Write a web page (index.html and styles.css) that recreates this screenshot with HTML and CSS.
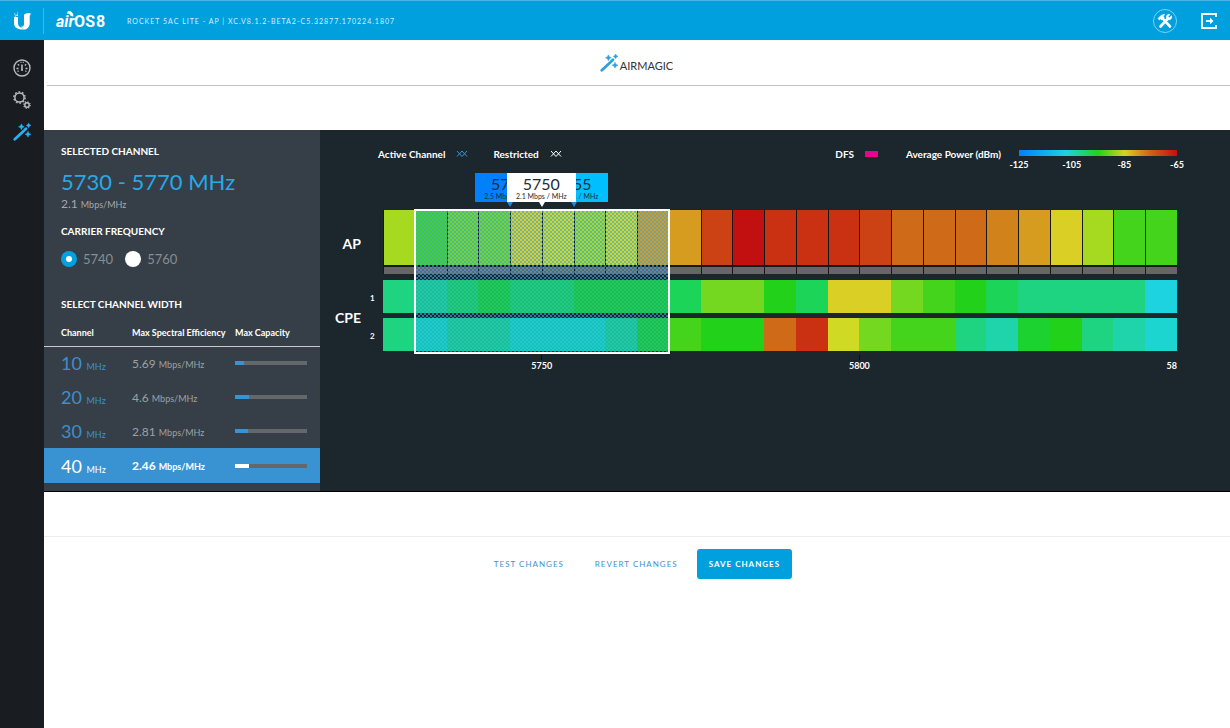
FILE: index.html
```html
<!DOCTYPE html>
<html lang="en">
<head>
<meta charset="utf-8">
<title>airOS 8 - airMagic</title>
<link rel="stylesheet" href="styles.css">
</head>
<body>
<svg class="sprite" aria-hidden="true">
  <symbol id="wand" viewBox="0 0 18 18">
    <path d="M1.800 16.200 10.400 8.200" stroke="currentColor" stroke-width="2.800" stroke-linecap="round"/>
    <path d="M11.600 7 13 5.700" stroke="currentColor" stroke-width="2.800" stroke-linecap="round"/>
    <path d="M8.400.800l1 2 2 1-2 1-1 2-1-2-2-1 2-1zM15.600 0l.9 1.600 1.500.8-1.500.8-.9 1.600-.9-1.600-1.500-.8 1.500-.8zM15 8.200l1 2 2 1-2 1-1 2-1-2-2-1 2-1z" fill="currentColor" stroke="currentColor" stroke-width=".4"/>
  </symbol>
</svg>

<header class="topbar">
  <a class="brand" href="#" aria-label="Ubiquiti">
    <svg width="18" height="18" viewBox="0 0 18 18" fill="#fff">
      <path d="M1 5h4v6.200c0 2.200 1.200 3.800 3.400 4.400.6 1 1.200 1.600 2 1.900C4.600 17.800 1 15.500 1 11z"/>
      <path d="M11 2.800C12 1.500 14 1 17.500 1v2l-.8.600V11c0 4-2.200 6.600-6.400 6.600-1.300-.8-1.900-1.900-2-3 2.200.2 2.700-1.200 2.700-3.200z"/>
      <path d="M1.200 1.400h1.200v1.200H1.200zM3.400 2.600h1.400v1.400H3.400zM1.800 3.400h1.200v1.200H1.800zM4.200.6h.8v.9h-.8z"/>
    </svg>
  </a>
  <div class="product"><span class="product-air">air</span><span class="product-os">OS</span><span class="product-num">8</span>
    <svg class="product-wave" width="7" height="6" viewBox="0 0 7 6" fill="#fff"><path d="M1 0c3.500 0 5.500 2 5.500 5.500L3.500 5C3.500 3.500 2.500 2.600 0 2.500z"/></svg>
  </div>
  <p class="device">ROCKET 5AC LITE - AP | XC.V8.1.2-BETA2-C5.32877.170224.1807</p>
  <button class="icon-btn" type="button" aria-label="Tools">
    <svg width="26" height="26" viewBox="0 0 26 26" fill="none" stroke="#fff">
      <circle cx="13" cy="13" r="11.500" stroke="#7fd0f2"/>
      <path d="M8.500 18.500 16 10.500" stroke-width="2.600" stroke-linecap="round"/>
      <path d="M19.500 7.800 17.200 9.800 16 8.700 18 6.500C15.800 5.700 13.800 7.600 14.600 10.200L16.200 11.700C18.800 12.200 20.400 10 19.500 7.800z" fill="#fff" stroke-width=".6"/>
      <path d="M10.600 10.400 18 18.500" stroke-width="2.600" stroke-linecap="round"/>
      <path d="M6 10.600 9 7.400 12.600 6.200 11.500 8.200 12 9.800 9.800 12 8.600 11 7.400 12z" fill="#fff" stroke-width=".6"/>
    </svg>
  </button>
  <button class="icon-btn" type="button" aria-label="Log out">
    <svg width="18" height="18" viewBox="0 0 18 18" fill="none" stroke="#fff" stroke-width="1.800">
      <path d="M16 5V2H2v14h14v-3"/>
      <path d="M6 9h5" /><path d="M10 5.800 13.500 9 10 12.200z" fill="#fff" stroke="none"/>
    </svg>
  </button>
</header>

<div class="shell">
  <nav class="sidebar" aria-label="Main">
    <a class="nav-link" href="#" aria-label="Dashboard">
      <svg width="18" height="18" viewBox="0 0 18 18" fill="none" stroke="currentColor">
        <circle cx="9" cy="9" r="8" stroke-width="1.400"/>
        <path d="M9 5.500V11" stroke-width="1.600"/><circle cx="9" cy="11" r="1" fill="currentColor" stroke="none"/>
        <path d="M3.500 9.500h2M12.500 9.500h2M4.800 5.200 6.200 6.400M13.200 5.200 11.800 6.400M7.500 3.300h1M9.800 3.300h1M4.500 12.500l1.200-.6M13.500 12.500l-1.200-.6" stroke-width="1.300"/>
      </svg>
    </a>
    <a class="nav-link" href="#" aria-label="Settings">
      <svg width="18" height="18" viewBox="0 0 18 18" fill="none" stroke="currentColor">
        <circle cx="6.500" cy="6.500" r="4.600" stroke-width="1.500"/>
        <circle cx="6.500" cy="6.500" r="5.700" stroke-width="1.300" stroke-dasharray="1.800 1.780"/>
        <circle cx="14" cy="14" r="2.200" stroke-width="1.400"/>
        <circle cx="14" cy="14" r="3.200" stroke-width="1.200" stroke-dasharray="1.200 1.310"/>
      </svg>
    </a>
    <a class="nav-link nav-link-active" href="#" aria-label="airMagic"><svg width="18" height="18"><use href="#wand"/></svg></a>
  </nav>

  <main class="content">
    <h1 class="page-title"><svg width="18" height="18"><use href="#wand"/></svg>AIRMAGIC</h1>

    <section class="panel">
      <aside class="settings">
        <h2 class="label">SELECTED CHANNEL</h2>
        <p class="channel">5730 - 5770 MHz</p>
        <p class="rate">2.1 <small>Mbps/MHz</small></p>
        <fieldset class="carrier">
          <legend class="label">CARRIER FREQUENCY</legend>
          <div class="options">
            <label class="option"><input class="radio" type="radio" name="carrier" checked>5740</label>
            <label class="option"><input class="radio" type="radio" name="carrier">5760</label>
          </div>
        </fieldset>
        <h2 class="label">SELECT CHANNEL WIDTH</h2>
        <table class="widths">
          <thead><tr><th>Channel</th><th>Max Spectral Efficiency</th><th>Max Capacity</th></tr></thead>
          <tbody>
            <tr><td class="width">10 <small>MHz</small></td><td>5.69 <small>Mbps/MHz</small></td><td><div class="bar"><div class="fill" style="width:12%"></div></div></td></tr>
            <tr><td class="width">20 <small>MHz</small></td><td>4.6 <small>Mbps/MHz</small></td><td><div class="bar"><div class="fill" style="width:20%"></div></div></td></tr>
            <tr><td class="width">30 <small>MHz</small></td><td>2.81 <small>Mbps/MHz</small></td><td><div class="bar"><div class="fill" style="width:18%"></div></div></td></tr>
            <tr class="current"><td class="width">40 <small>MHz</small></td><td>2.46 <small>Mbps/MHz</small></td><td><div class="bar"><div class="fill" style="width:20%"></div></div></td></tr>
          </tbody>
        </table>
      </aside>

      <div class="spectrum">
        <div class="key">
          <span class="key-item">Active Channel <svg class="key-active" width="12" height="6" viewBox="0 0 12 6" fill="none" stroke="currentColor"><path d="M1 0 6 5.500M6 0 1 5.500M6 0l5 5.500M11 0 6 5.500"/></svg></span>
          <span class="key-item">Restricted <svg width="12" height="6" viewBox="0 0 12 6" fill="none" stroke="currentColor"><path d="M1 0 6 5.500M6 0 1 5.500M6 0l5 5.500M11 0 6 5.500"/></svg></span>
          <span class="key-item key-dfs">DFS <i class="swatch"></i></span>
          <span class="key-item">Average Power (dBm)</span>
          <div class="scale">
            <div class="ramp"></div>
            <div class="scale-ticks"><span>-125</span><span>-105</span><span>-85</span><span>-65</span></div>
          </div>
        </div>

        <div class="chart">
          <div class="name name-ap">AP</div>
          <div class="name name-cpe">CPE</div>
          <div class="num num-one">1</div>
          <div class="num num-two">2</div>
          <div class="plot">
            <div class="cells cells-ap">
              <i class="lime"></i><i class="leaf"></i><i class="grass"></i><i class="grass"></i><i class="yellow"></i><i class="acid"></i><i class="lime"></i><i class="acid"></i><i class="amber"></i><i class="amber"></i><i class="rust"></i><i class="crimson"></i><i class="red"></i><i class="red"></i><i class="red"></i><i class="rust"></i><i class="orange"></i><i class="orange"></i><i class="orange"></i><i class="ochre"></i><i class="amber"></i><i class="yellow"></i><i class="lime"></i><i class="leaf"></i><i class="leaf"></i>
            </div>
            <div class="cells cells-dfs">
              <i></i><i></i><i></i><i></i><i></i><i></i><i></i><i></i><i></i><i></i><i></i><i></i><i></i><i></i><i></i><i></i><i></i><i></i><i></i><i></i><i></i><i></i><i></i><i></i><i></i>
            </div>
            <div class="cells cells-cpe">
              <i class="mint"></i><i class="teal"></i><i class="mint"></i><i class="emerald"></i><i class="mint"></i><i class="mint"></i><i class="emerald"></i><i class="emerald"></i><i class="emerald"></i><i class="emerald"></i><i class="grass"></i><i class="grass"></i><i class="green"></i><i class="emerald"></i><i class="yellow"></i><i class="yellow"></i><i class="grass"></i><i class="leaf"></i><i class="green"></i><i class="emerald"></i><i class="mint"></i><i class="mint"></i><i class="mint"></i><i class="mint"></i><i class="cyan"></i>
            </div>
            <div class="cells cells-cpe">
              <i class="mint"></i><i class="aqua"></i><i class="teal"></i><i class="teal"></i><i class="aqua"></i><i class="aqua"></i><i class="aqua"></i><i class="teal"></i><i class="emerald"></i><i class="leaf"></i><i class="green"></i><i class="green"></i><i class="orange"></i><i class="red"></i><i class="acid"></i><i class="grass"></i><i class="leaf"></i><i class="leaf"></i><i class="mint"></i><i class="teal"></i><i class="jade"></i><i class="green"></i><i class="mint"></i><i class="teal"></i><i class="aqua"></i>
            </div>
            <div class="selection selection-hatch"></div>
            <div class="selection selection-frame"></div>
            <div class="flag flag-low"><b>5745</b><small>2.5 Mbps / MHz</small></div>
            <div class="flag flag-high"><b>5755</b><small>2.1 Mbps / MHz</small></div>
            <div class="flag flag-mid"><b>5750</b><small>2.1 Mbps / MHz</small></div>
          </div>
          <div class="axis"><span class="tick tick-first">5750</span><span class="tick tick-second">5800</span><span class="axis-end">58</span></div>
        </div>
      </div>
    </section>

    <footer class="actions">
      <button class="action" type="button">TEST CHANGES</button>
      <button class="action" type="button">REVERT CHANGES</button>
      <button class="action action-save" type="button">SAVE CHANGES</button>
    </footer>
  </main>
</div>
</body>
</html>
```
FILE: styles.css
```css
* { box-sizing: border-box; }
body {
  margin: 0;
  min-height: 100vh;
  display: flex;
  flex-direction: column;
  font-family: Lato, "Liberation Sans", sans-serif;
  font-size: 9px;
  background: #fff;
  color: #fff;
}
h1, h2, p, fieldset, legend { margin: 0; padding: 0; border: 0; }
button { border: 0; background: none; font-family: inherit; cursor: pointer; }
svg { display: block; }
.sprite { position: absolute; width: 0; height: 0; }

.topbar {
  display: flex;
  align-items: center;
  height: 40px;
  padding-right: 12px;
  background: #00a0df;
  border-top: 1px solid #48b4e6;
}
.brand { width: 44px; height: 26px; padding: 4px 13px; border-right: 1px solid #3fb6e8; }
.product {
  position: relative;
  display: flex;
  align-items: baseline;
  margin-left: 12px;
  width: 71px;
  padding-top: 2px;
  font-family: Roboto, "Liberation Sans", sans-serif;
  font-weight: bold;
  line-height: 20px;
}
.product-air { font-size: 16px; font-style: italic; }
.product-os { font-size: 16px; }
.product-num { font-size: 16px; margin-left: 1px; }
.product-wave { position: absolute; left: 11px; top: 1px; }
.device { flex: 1; font-size: 7px; letter-spacing: 1px; color: #d4f0fc; }
.icon-btn { padding: 0; margin-left: 22px; }

.shell { flex: 1; display: flex; }
.sidebar {
  width: 44px;
  flex: none;
  display: flex;
  flex-direction: column;
  align-items: center;
  gap: 14px;
  padding-top: 19px;
  background: #191c20;
}
.nav-link { color: #b9bcbe; }
.nav-link-active { color: #2aaef2; }

.content { flex: 1; min-width: 0; }
.page-title {
  display: flex;
  align-items: center;
  justify-content: center;
  gap: 2px;
  height: 46px;
  margin: 0 0 44px 3px;
  padding: 6px 4px 0 0;
  border-bottom: 1px solid #bfc1c3;
  font-size: 11px;
  font-weight: normal;
  color: #333;
}
.page-title svg { color: #2f9fe0; margin-bottom: 6px; }

.panel { display: flex; background: #1c262d; border-bottom: 1px solid #000; }

.settings { width: 276px; flex: none; padding: 14px 0 8px; background: #363f47; }
.label { padding-left: 17px; font-size: 10px; line-height: 14px; font-weight: bold; }
.channel { padding: 9px 0 0 17px; font-size: 22px; line-height: 30px; color: #27a9e8; }
.rate { padding-left: 17px; font-size: 12px; line-height: 14px; color: #a3a8ac; }
.rate small { font-size: 9px; }
.carrier { margin-top: 12px; }
.options { display: flex; gap: 12px; padding: 13px 0 30px 17px; }
.option { display: flex; align-items: center; gap: 6px; height: 16px; font-size: 13px; color: #878e93; }
.radio { appearance: none; width: 16px; height: 16px; margin: 0; border-radius: 50%; background: #fff; }
.radio:checked { border: 5px solid #05a0df; }
.widths { width: 100%; margin-top: 8px; border-collapse: collapse; table-layout: fixed; }
.widths th { height: 27px; padding: 0; border-bottom: 1px solid #c9cccf; font-size: 9px; text-align: left; white-space: nowrap; }
.widths th:nth-child(1) { width: 88px; padding-left: 17px; }
.widths th:nth-child(2) { width: 103px; }
.widths td { height: 34px; padding: 0; font-size: 12px; color: #9ca1a5; }
.widths td small { font-size: 9px; }
.widths .width { padding-left: 17px; font-size: 18px; color: #3d8fcb; }
.widths .current td { height: 35px; background: #3993d3; color: #fff; font-weight: bold; }
.widths .current .width { font-weight: normal; }
.bar { width: 72px; height: 4px; background: #65686b; }
.fill { height: 4px; background: #3993d3; }
.current .fill { background: #fff; }

.spectrum { flex: 1; min-width: 0; padding: 17px 53px 0 0; }
.key { display: flex; height: 62px; padding-left: 58px; font-weight: bold; }
.key-item { display: flex; align-items: center; gap: 11px; height: 14px; margin-right: 25px; font-size: 10px; white-space: nowrap; }
.key-dfs { margin-left: auto; margin-right: 28px; }
.key-active { color: #3993d3; }
.swatch { width: 13px; height: 6px; background: #ec0090; }
.scale { width: 158px; margin-left: -7px; padding-top: 3px; }
.ramp { height: 6px; background: linear-gradient(90deg, #0080ff, #1dd3e0 30%, #22d21a 50%, #dacf24 67%, #cf6a18 82%, #c20f0f); }
.scale-ticks { display: flex; justify-content: space-between; margin: 3px -10px 0; line-height: 11px; }
.scale-ticks span { width: 20px; text-align: center; }

.chart { display: grid; grid-template-columns: 41px 22px 1fr; grid-template-rows: 70px 38px 38px auto; }
.name { grid-column: 1; font-size: 14px; font-weight: bold; text-align: right; }
.name-ap { grid-row: 1; padding-top: 26px; }
.name-cpe { grid-row: 2 / 4; align-self: center; }
.num { grid-column: 2; align-self: center; padding-left: 9px; font-size: 8px; font-weight: bold; }
.num-one { grid-row: 2; }
.num-two { grid-row: 3; }
.plot { position: relative; grid-column: 3; grid-row: 1 / 4; padding-top: 1px; }
.cells { display: grid; grid-template-columns: repeat(25, 1fr); }
.cells-ap { height: 55px; background: #121417; }
.cells-ap i { border-left: 1px solid #15191a; }
.cells-dfs { height: 9px; margin-bottom: 6px; padding-top: 2px; background: #15191c; }
.cells-dfs i { background: #666; border-left: 1px solid #15191a; }
.cells-cpe { position: relative; z-index: 1; height: 33px; margin-bottom: 5px; }
.cells-cpe i:nth-child(n+2):nth-child(-n+9) { opacity: .88; }
.lime { background: #a6da20; }
.leaf { background: #44d41c; }
.grass { background: #74d820; }
.yellow { background: #dacf24; }
.acid { background: #d0da24; }
.amber { background: #d69c1f; }
.ochre { background: #d2821b; }
.orange { background: #cf6a18; }
.rust { background: #cc4214; }
.red { background: #ca3012; }
.crimson { background: #c20f0f; }
.green { background: #22d21a; }
.jade { background: #1cd230; }
.emerald { background: #1cd458; }
.mint { background: #1ed480; }
.teal { background: #1fd3aa; }
.aqua { background: #1dd5d0; }
.cyan { background: #1dd3e0; }

.selection {
  position: absolute;
  left: 4%;
  width: calc(32% + 2px);
  top: 0;
  bottom: 1px;
  margin-left: -1px;
}
.selection-hatch {
  background: conic-gradient(rgba(60, 165, 225, .65) 25%, transparent 0 50%, rgba(60, 165, 225, .65) 0 75%, transparent 0) 0 0 / 4px 4px;
}
.selection-frame { z-index: 2; border: 2px solid #fff; }
.flag {
  position: absolute;
  top: -36px;
  width: 69px;
  height: 29px;
  margin-left: -35px;
  color: #222c33;
  text-align: center;
  line-height: 1;
}
.flag::after {
  content: "";
  position: absolute;
  left: 32px;
  top: 29px;
  border: 3px solid transparent;
  border-top: 5px solid #fff;
  border-bottom: 0;
}
.flag b { display: block; padding-top: 2px; font-size: 16px; font-weight: normal; line-height: 17px; }
.flag small { display: block; font-size: 7px; line-height: 8px; white-space: nowrap; }
.flag-low { left: 16%; background: #0080ff; }
.flag-mid { left: 20%; background: #fff; }
.flag-high { left: 24%; background: #00bfff; }
.flag-low::after, .flag-high::after { border-top-color: #1e88d8; }

.axis { grid-column: 3; position: relative; height: 26px; padding-top: 5px; font-weight: bold; text-align: right; }
.tick { position: absolute; top: 0; width: 40px; margin-left: -20px; text-align: center; }
.tick::before { content: ""; display: block; width: 1px; height: 5px; margin: 0 auto; background: #0a0d10; }
.tick-first { left: 20%; }
.tick-second { left: 60%; }

.actions {
  display: flex;
  justify-content: center;
  gap: 7px;
  margin-top: 44px;
  padding-top: 12px;
  border-top: 1px solid #eceeef;
}
.action { height: 30px; padding: 0 12px; border-radius: 3px; font-size: 8px; letter-spacing: 1px; color: #3d93cf; }
.action-save { background: #00a0df; color: #fff; font-weight: bold; }
```
